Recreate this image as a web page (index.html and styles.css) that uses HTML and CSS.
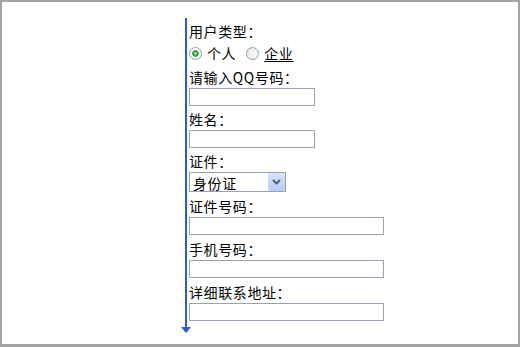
FILE: index.html
```html
<!DOCTYPE html>
<html lang="zh-CN">
<head>
  <meta charset="UTF-8">
  <meta name="viewport" content="width=device-width, initial-scale=1.0">
  <title>用户注册</title>
  <link rel="stylesheet" href="styles.css">
</head>
<body>
  <div class="frame">
    <form class="reg-form">
      <div class="label">用户类型：</div>
      <div class="radios">
        <label class="radio"><input type="radio" name="utype" checked> 个人</label>
        <label class="radio radio-alt"><input type="radio" name="utype"> <span class="under">企业</span></label>
      </div>

      <div class="field field-first">
        <div class="label">请输入QQ号码：</div>
        <input class="text" type="text">
      </div>
      <div class="field">
        <div class="label">姓名：</div>
        <input class="text" type="text">
      </div>
      <div class="field">
        <div class="label">证件：</div>
        <div class="select-box">
          <select class="select">
            <option>身份证</option>
            <option>护照</option>
            <option>军官证</option>
          </select>
          <span class="select-btn">
            <svg width="9" height="6" viewBox="0 0 9 6"><path d="M1 1 L4.5 4.5 L8 1" fill="none" stroke="#4b5f8c" stroke-width="2"/></svg>
          </span>
        </div>
      </div>
      <div class="field field-loose">
        <div class="label">证件号码：</div>
        <input class="text text-wide" type="text">
      </div>
      <div class="field field-loose">
        <div class="label">手机号码：</div>
        <input class="text text-wide" type="text">
      </div>
      <div class="field field-loose">
        <div class="label">详细联系地址：</div>
        <input class="text text-wide" type="text">
      </div>
    </form>
  </div>
</body>
</html>
```

FILE: styles.css
```css
* {
  box-sizing: border-box;
}

body {
  margin: 0;
  background-color: #fff;
  font-family: "Noto Sans CJK SC", "DejaVu Sans", sans-serif;
  font-size: 14px;
  color: #000;
}

.frame {
  height: 347px;
  border: 2px solid #a2a2a2;
  border-bottom-width: 3px;
  padding-top: 16px;
  overflow: hidden;
}

.reg-form {
  position: relative;
  width: 240px;
  margin: 0 0 0 183px;
  padding: 4px 0 6px 2px;
  border-left: 2px solid #2d5bd6;
}

/* arrow head at the bottom of the blue line */
.reg-form::after {
  content: "";
  position: absolute;
  left: -6px;
  top: 100%;
  border-top: 6px solid #2d5bd6;
  border-left: 5px solid transparent;
  border-right: 5px solid transparent;
}

.label {
  line-height: 18px;
  letter-spacing: 0.6px;
  white-space: nowrap;
}

.radios {
  display: flex;
  align-items: center;
  height: 22px;
  margin-top: 2px;
}

.radio {
  display: inline-flex;
  align-items: center;
  gap: 5px;
  letter-spacing: 0.6px;
}

.radio-alt {
  margin-left: 10px;
}

.under {
  text-decoration: underline;
  text-underline-offset: 2px;
}

.radio input {
  appearance: none;
  width: 13px;
  height: 13px;
  margin: 0;
  border: 1px solid #8a9bb8;
  border-radius: 50%;
  background: linear-gradient(135deg, #e6e6e0, #fff);
}

.radio input:checked {
  background: radial-gradient(circle, #8be08b 0 1px, #2aa52a 2px 3px, #fff 3.5px);
}

.field {
  margin-top: 4px;
}

.field-first {
  margin-top: 4px;
}

.field-loose {
  margin-top: 5px;
}

.text {
  display: block;
  width: 126px;
  height: 18px;
  margin: 2px 0 0;
  padding: 0 2px;
  border: 1px solid #99a2b0;
  font: inherit;
}

.text-wide {
  width: 195px;
}

.select-box {
  position: relative;
  width: 97px;
  height: 20px;
  margin-top: 2px;
}

.select {
  appearance: none;
  display: block;
  width: 100%;
  height: 20px;
  margin: 0;
  padding: 0 0 0 3px;
  border: 1px solid #99a2b0;
  border-radius: 0;
  background-color: #fff;
  font: inherit;
  letter-spacing: 0.6px;
  color: #000;
}

.select-btn {
  position: absolute;
  top: 1px;
  right: 1px;
  width: 17px;
  height: 18px;
  display: flex;
  align-items: center;
  justify-content: center;
  border-radius: 2px;
  background: linear-gradient(#d8e3fd, #b9ccf7);
  pointer-events: none;
}
```
